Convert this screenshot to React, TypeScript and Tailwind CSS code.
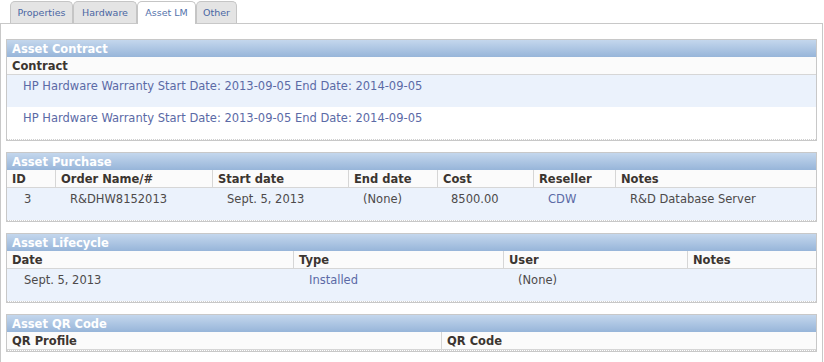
import React from 'react';

const tabs = [
  { label: 'Properties', w: 'w-[63px]' },
  { label: 'Hardware', w: 'w-[64px]' },
  { label: 'Asset LM', w: 'w-[59px]', active: true },
  { label: 'Other', w: 'w-[41px]' },
];

function Box({ title, children }: { title: string; children: React.ReactNode }) {
  return (
    <div className="border border-[#c8c8c8] mb-[11px] bg-white">
      <div className="h-[17px] leading-[18px] pl-[5px] text-white font-bold bg-linear-to-b from-[#c4d7ed] to-[#97b5d9]">
        {title}
      </div>
      <div className="border-b border-dotted border-[#d0d0d0]">{children}</div>
    </div>
  );
}

function HeadRow({ cols, cells }: { cols: string; cells: string[] }) {
  return (
    <div className={`grid ${cols} h-[18px] bg-[#fbfbfb] border-b border-[#d6d6d6]`}>
      {cells.map((c, i) => (
        <div
          key={i}
          className={`pl-[5px] leading-[18px] font-bold text-[#3b3530] ${i > 0 ? 'border-l border-[#d6d6d6]' : ''}`}
        >
          {c}
        </div>
      ))}
    </div>
  );
}

export default function App() {
  return (
    <div className="bg-white w-[824px] h-[362px] overflow-hidden font-['DejaVu_Sans',Verdana,sans-serif] text-[11.5px]">
      {/* tabs */}
      <div className="flex items-end h-[23px] pl-[10px]">
        {tabs.map((t) => (
          <div
            key={t.label}
            className={`${t.w} text-center rounded-t-[5px] border border-b-0 border-[#c5c5c5] text-[9.5px] ${
              t.active
                ? 'h-[23px] -mb-px relative z-10 bg-white text-[#5573ab] leading-[22px]'
                : 'h-[22px] bg-[#e4e4e4] text-[#4a66a3] leading-[21px]'
            }`}
          >
            {t.label}
          </div>
        ))}
      </div>

      {/* panel */}
      <div className="w-[823px] border border-[#c8c8c8] px-[5px] pt-[15px] pb-[11px]">
        <Box title="Asset Contract">
          <HeadRow cols="grid-cols-[1fr]" cells={['Contract']} />
          <div className="h-[32px] bg-[#ebf2fc] pl-[16px] pt-[4px] leading-[15px] text-[#5b6aa6]">
            HP Hardware Warranty Start Date: 2013-09-05 End Date: 2014-09-05
          </div>
          <div className="h-[32px] bg-white pl-[16px] pt-[4px] leading-[15px] text-[#5b6aa6]">
            HP Hardware Warranty Start Date: 2013-09-05 End Date: 2014-09-05
          </div>
        </Box>

        <Box title="Asset Purchase">
          <HeadRow
            cols="grid-cols-[48px_157px_136px_89px_96px_82px_1fr]"
            cells={['ID', 'Order Name/#', 'Start date', 'End date', 'Cost', 'Reseller', 'Notes']}
          />
          <div className="grid grid-cols-[48px_157px_136px_89px_96px_82px_1fr] h-[32px] bg-[#ebf2fc] pt-[4px] leading-[15px] text-[#4d4a4a]">
            <div className="pl-[17px]">3</div>
            <div className="pl-[15px]">R&amp;DHW8152013</div>
            <div className="pl-[15px]">Sept. 5, 2013</div>
            <div className="pl-[15px]">(None)</div>
            <div className="pl-[14px]">8500.00</div>
            <div className="pl-[15px] text-[#5b6aa6]">CDW</div>
            <div className="pl-[15px]">R&amp;D Database Server</div>
          </div>
        </Box>

        <Box title="Asset Lifecycle">
          <HeadRow cols="grid-cols-[286px_210px_184px_1fr]" cells={['Date', 'Type', 'User', 'Notes']} />
          <div className="grid grid-cols-[286px_210px_184px_1fr] h-[32px] bg-[#ebf2fc] pt-[4px] leading-[15px] text-[#4d4a4a]">
            <div className="pl-[17px]">Sept. 5, 2013</div>
            <div className="pl-[16px] text-[#5b6aa6]">Installed</div>
            <div className="pl-[15px]">(None)</div>
            <div />
          </div>
        </Box>

        <Box title="Asset QR Code">
          <HeadRow cols="grid-cols-[434px_1fr]" cells={['QR Profile', 'QR Code']} />
        </Box>
      </div>
    </div>
  );
}
